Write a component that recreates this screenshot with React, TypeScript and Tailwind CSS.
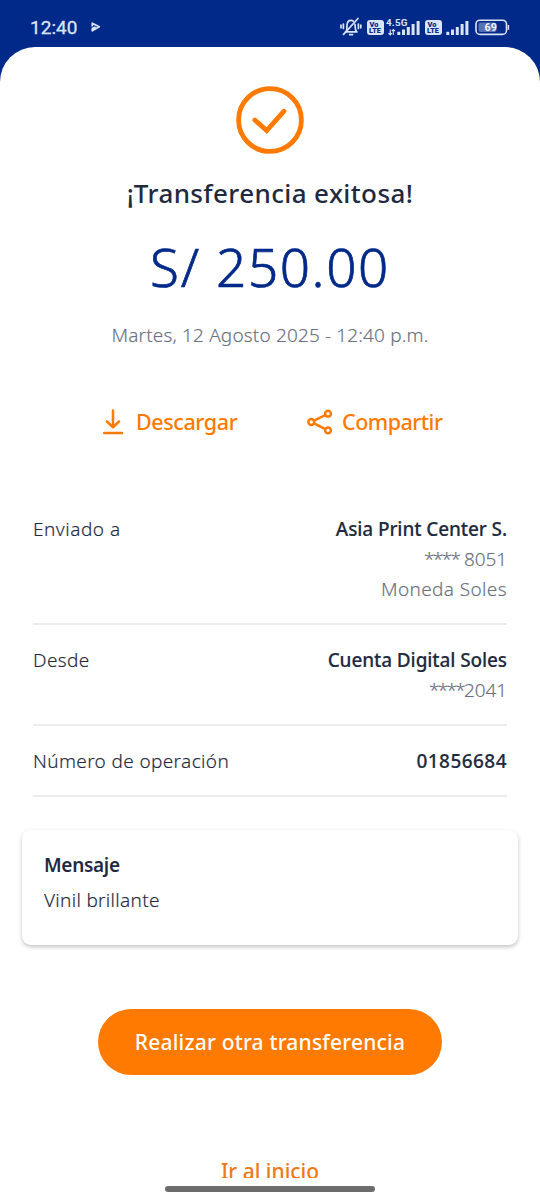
import React from "react";

function VolteBadge() {
  return (
    <svg width="17" height="15" viewBox="0 0 17 15">
      <rect x="0" y="0" width="17" height="15" rx="3" fill="#dbe3f6" />
      <text x="2.6" y="7" fontFamily="Roboto, sans-serif" fontWeight="900" fontSize="7.4" fill="#00298a">Vo</text>
      <text x="2" y="13.4" fontFamily="Roboto, sans-serif" fontWeight="900" fontSize="7.2" fill="#00298a">LTE</text>
    </svg>
  );
}

function StatusBar() {
  return (
    <header className="flex h-[47px] items-center pl-[30px] pr-[30px] pt-[7px] text-[#dbe3f6]">
      <span className="w-[61px] font-['Roboto',sans-serif] text-[19px] font-normal leading-none tracking-[0.05px] [-webkit-text-stroke:0.3px_#dbe3f6]">12:40</span>
      <svg width="10" height="10" viewBox="0 0 10 10" fill="none" stroke="#dbe3f6" strokeWidth="1.8">
        <path d="M1.3 4.6V1.2L8.2 4.8L1.3 8.8V6.6L4.6 5" strokeLinejoin="round" />
      </svg>
      <div className="ml-auto flex items-center">
        <svg width="22" height="20" viewBox="0 0 22 20" fill="none" stroke="#dbe3f6" strokeWidth="1.7" strokeLinecap="round">
          <path d="M5.5 14.8H17M6.5 14C7.2 12 6.8 10.5 7 8C7.3 5 9 3.4 11 3.4C11.9 3.4 12.7 3.7 13.3 4.2M15 7.4C15.3 10 14.9 12.2 16.3 14.2M9.6 17.6H12.6" />
          <path d="M18 1.5L3.5 17.4M3.4 7V11.5M1 8.2V10.8M18.4 7V11.5M20.8 8.2V10.8" />
        </svg>
        <span className="ml-[5px]"><VolteBadge /></span>
        <svg className="ml-[2px]" width="36" height="19" viewBox="0 0 36 19" fill="#dbe3f6">
          <text x="0" y="8.3" fontFamily="Roboto, sans-serif" fontWeight="700" fontSize="9.8" textLength="21.5">4.5G</text>
          <path d="M4.2 17V11.5M2.5 15.2L4.2 17L5.9 15.2M7.3 17V11.5M5.8 13.2L7.3 11.5L9 13.2" stroke="#dbe3f6" strokeWidth="1.1" fill="none" />
          <path d="M11.3 13.8h3V17h-3zM16 11.4h3V17h-3zM20.8 8.9h3V17h-3zM25.6 6h3v11h-3zM30.6 3h3v14h-3z" />
        </svg>
        <span className="ml-[3px]"><VolteBadge /></span>
        <svg className="ml-[4px]" width="23" height="19" viewBox="0 0 23 19" fill="#dbe3f6">
          <path d="M.3 13.8h3V17h-3zM5 11.4h3V17H5zM9.8 8.9h3V17h-3zM14.6 6h3v11h-3zM19.4 3h3v14h-3z" />
        </svg>
        <svg className="ml-[6px]" width="35" height="17" viewBox="0 0 35 17">
          <rect x="1" y="1.2" width="30.5" height="14.2" rx="4" fill="none" stroke="#dbe3f6" strokeWidth="1.6" />
          <rect x="3.5" y="3.6" width="18" height="9.4" rx="2" fill="#5871b4" />
          <path d="M33.4 6v4.8" stroke="#dbe3f6" strokeWidth="1.5" />
          <text x="9.5" y="12.1" fontFamily="Roboto, sans-serif" fontWeight="700" fontSize="10.8" fill="#f0f4ff">69</text>
        </svg>
      </div>
    </header>
  );
}

function Divider() {
  return <div className="mt-[19px] h-[2px] bg-[#ebecee]" />;
}

export default function App() {
  return (
    <div className="h-[1200px] w-[540px] overflow-hidden bg-[#00298a] font-['Noto_Sans','Open_Sans',sans-serif] text-[19px] font-light leading-[30px] text-[#1f2a40]">
      <StatusBar />
      <main className="flex h-[1153px] flex-col items-center rounded-t-[35px] bg-white pt-[39px]">
        <svg width="68" height="68" viewBox="0 0 68 68" fill="none" stroke="#ff7a00" strokeWidth="4.8">
          <circle cx="34" cy="34" r="31.4" />
          <path d="M18.8 34L30.7 44.6L48 25.2" strokeLinecap="round" />
        </svg>
        <h1 className="mt-[19px] whitespace-nowrap text-[26px] font-medium leading-[40px] tracking-[0.38px]">¡Transferencia exitosa!</h1>
        <p className="mt-[19px] whitespace-nowrap text-[53px] leading-[70px] tracking-[1.6px] text-[#00298a] [-webkit-text-stroke:0.7px_#00298a]">S/ 250.00</p>
        <p className="mt-[18px] whitespace-nowrap tracking-[0.15px] text-[#6a7180] [-webkit-text-stroke:0.15px_#6a7180]">Martes, 12 Agosto 2025 - 12:40 p.m.</p>

        <div className="mt-[52px] flex h-[40px] w-full pl-[102px] text-[21.5px] font-medium leading-[40px] tracking-[-0.4px] text-[#ff7a00]">
          <button className="flex w-[205px] items-center gap-[12px]">
            <svg width="22" height="28" viewBox="0 0 22 28" fill="none" stroke="#ff7a00" strokeWidth="2.5" strokeLinecap="round" strokeLinejoin="round">
              <path d="M11 2.5V19M5 13.5L11 19.4L17 13.5M2.2 25H20" />
            </svg>
            <span>Descargar</span>
          </button>
          <button className="flex items-center gap-[9px] tracking-[-0.5px]">
            <svg width="26" height="26" viewBox="0 0 26 26" fill="none" stroke="#ff7a00" strokeWidth="2.5">
              <circle cx="4.3" cy="13" r="2.9" />
              <circle cx="21" cy="4.7" r="2.9" />
              <circle cx="21" cy="21.4" r="2.9" />
              <path d="M7 11.7L18.4 6M7 14.3L18.4 20.1" />
            </svg>
            <span>Compartir</span>
          </button>
        </div>

        <section className="mt-[72px] flex w-[474px] flex-col tracking-[0.37px] [-webkit-text-stroke-width:0.15px]">
          <div className="flex justify-between">
            <span className="tracking-[0.52px]">Enviado a</span>
            <div className="flex flex-col items-end text-[#6a7180]">
              <span className="font-medium tracking-[-0.1px] text-[#1f2a40]">Asia Print Center S.</span>
              <span className="tracking-[-0.1px]"><span className="tracking-[-1.7px]">****</span> 8051</span>
              <span>Moneda Soles</span>
            </div>
          </div>
          <Divider />
          <div className="mt-[20px] flex justify-between">
            <span>Desde</span>
            <div className="flex flex-col items-end text-[#6a7180]">
              <span className="font-medium tracking-[-0.1px] text-[#1f2a40]">Cuenta Digital Soles</span>
              <span className="tracking-[-0.1px]"><span className="tracking-[-1.7px]">****</span>2041</span>
            </div>
          </div>
          <Divider />
          <div className="mt-[20px] flex justify-between">
            <span>Número de operación</span>
            <span className="font-medium tracking-[0.45px]">01856684</span>
          </div>
          <Divider />
        </section>

        <section className="mt-[33px] flex h-[115px] w-[496px] shrink-0 flex-col items-start rounded-[9px] bg-white pl-[22px] pt-[20px] shadow-[0_2px_4px_rgba(0,0,0,0.24)]">
          <h2 className="font-semibold tracking-[-0.3px]">Mensaje</h2>
          <p className="mt-[5px] tracking-[0.3px] [-webkit-text-stroke-width:0.15px]">Vinil brillante</p>
        </section>

        <button className="mt-[64px] flex h-[66px] w-[344px] shrink-0 items-center justify-center whitespace-nowrap rounded-full bg-[#ff7a00] text-[21px] font-medium tracking-[0.2px] text-white">
          Realizar otra transferencia
        </button>
        <div className="mt-[81px] h-[22px] shrink-0 overflow-hidden text-[21px] font-medium text-[#ee7918]">
          <span>Ir al inicio</span>
        </div>
        <div className="mt-[8px] h-[6px] w-[210px] shrink-0 rounded-full bg-[#6c6c6c]" />
      </main>
    </div>
  );
}
